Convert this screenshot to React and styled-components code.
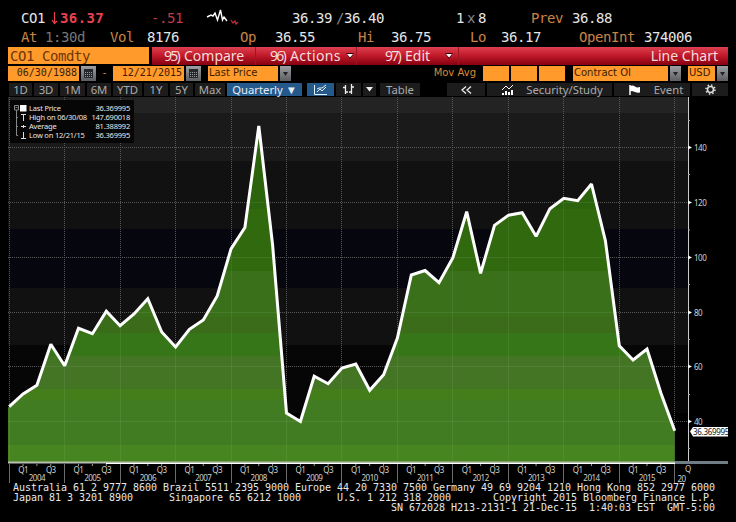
import React from "react";
import styled, { createGlobalStyle } from "styled-components";

const GlobalStyle = createGlobalStyle`
  body {
    margin: 0;
    background: #000;
    overflow: hidden;
  }
  * {
    box-sizing: border-box;
  }
`;

const levels = [
  406.7, 394, 385.3, 344.3, 365.7, 328.3, 333.7, 311.3, 325.7, 314, 298.7, 332,
  347, 329.3, 320, 296, 249, 227.5, 126, 245, 413, 421.5, 376.3, 383.7, 368,
  364, 390.3, 374.7, 338, 275, 270.5, 282.7, 257.7, 211.7, 273.3, 225.3, 215.3,
  212.7, 236.3, 208.7, 198.3, 200.7, 184, 240.7, 345.7, 360, 349, 393, 430.7,
];
const stepX = 13.865;
const px = (i) => 9.2 + i * stepX;
const points = levels.map((y, i) => `${px(i).toFixed(1)},${y}`).join(" ");
const areaPoints = `8,463 8,407.5 ${points} 674.7,463`;

const darkBands = [
  [97, 16, "#232323"],
  [113, 48, "#1a1a1a"],
  [161, 68, "#111111"],
  [229, 59, "#06060f"],
  [288, 57, "#111111"],
  [345, 68, "#060606"],
  [413, 50, "#000000"],
];
const greenBands = [
  [97, 112, "#2c640e"],
  [209, 62, "#31690f"],
  [271, 46, "#3a701a"],
  [317, 16, "#3a6c1a"],
  [333, 23, "#367618"],
  [356, 33, "#437525"],
  [389, 11, "#437e1a"],
  [400, 45, "#417c22"],
  [445, 18, "#46851f"],
];
const yTicks = [
  [140, 147.5],
  [120, 202.5],
  [100, 257.5],
  [80, 312.5],
  [60, 366.5],
  [40, 421.5],
];
const minorTicks = [120.5, 174.5, 230, 284.5, 339.5, 394.5, 448.5];
const years = [2004, 2005, 2006, 2007, 2008, 2009, 2010, 2011, 2012, 2013, 2014, 2015];
const gridX = [...years, 2016].map((_, i) => Math.floor(px(i * 4)) + 0.5);

const quotesTop = [
  { x: 21, text: "CO1" },
  { x: 60, text: "36.37", color: "#e8414f", bold: true },
  { x: 151, text: "-.51", color: "#c23a45" },
  { x: 292, text: "36.39" },
  { x: 336, text: "/", color: "#888" },
  { x: 344, text: "36.40" },
  { x: 456, text: "1" },
  { x: 467, text: "x", color: "#888" },
  { x: 478, text: "8" },
  { x: 531, text: "Prev", color: "#c98347" },
  { x: 572, text: "36.88" },
];
const quotesBottom = [
  { x: 21, text: "At", color: "#c98347" },
  { x: 45, text: "1:30d", color: "#777" },
  { x: 110, text: "Vol", color: "#c98347" },
  { x: 147, text: "8176" },
  { x: 240, text: "Op", color: "#c98347" },
  { x: 275, text: "36.55" },
  { x: 358, text: "Hi", color: "#c98347" },
  { x: 391, text: "36.75" },
  { x: 470, text: "Lo", color: "#c98347" },
  { x: 501, text: "36.17" },
  { x: 579, text: "OpenInt", color: "#c98347" },
  { x: 644, text: "374006" },
];

// each quote sits in a track that runs up to where the next one starts
const tracks = (items) =>
  items
    .map((q, i) => (i < items.length - 1 ? `${items[i + 1].x - q.x}px` : "1fr"))
    .join(" ");

function QuoteRow({ items, top }) {
  return (
    <QuoteLine $start={items[0].x} $tracks={tracks(items)} $top={top}>
      {items.map((q, i) => (
        <Quote key={i} $color={q.color} $bold={q.bold}>
          {q.text}
        </Quote>
      ))}
    </QuoteLine>
  );
}

function Calendar() {
  return (
    <GreyButton $w={15}>
      <svg width="9" height="9" viewBox="0 0 9 9">
        <path d="M0 0H9V9H0Z" fill="#24272b" />
        <path d="M1 3.500H8M1 5.500H8M1 7.500H8" stroke="#999" strokeWidth="1" strokeDasharray="1 1" />
      </svg>
    </GreyButton>
  );
}

function Drop() {
  return (
    <GreyButton $w={11}>
      <svg width="5" height="4">
        <path d="M0 0H5L2.5 4Z" fill="#222" />
      </svg>
    </GreyButton>
  );
}

function MenuArrow() {
  return (
    <svg width="8" height="6">
      <path d="M0 0H8L4 6Z" fill="#310508" />
      <path d="M1 1H7L4 4.5Z" fill="#fff" />
    </svg>
  );
}

function Chart() {
  return (
    <Plot width="736" height="386" viewBox="0 97 736 386">
      <defs>
        <clipPath id="area">
          <polygon points={areaPoints} />
        </clipPath>
      </defs>
      {darkBands.map(([y, h, c]) => (
        <rect key={y} x="8" y={y} width="680" height={h} fill={c} />
      ))}
      <g stroke="#585858" strokeDasharray="1 1">
        {yTicks.map(([v, y]) => (
          <path key={v} d={`M8 ${y}H688`} />
        ))}
        {gridX.map((x) => (
          <path key={x} d={`M${x} 97V463`} />
        ))}
      </g>
      <g clipPath="url(#area)">
        {greenBands.map(([y, h, c]) => (
          <rect key={y} x="8" y={y} width="668" height={h} fill={c} />
        ))}
        <g stroke="#fff" strokeOpacity=".07">
          {yTicks.map(([v, y]) => (
            <path key={v} d={`M8 ${y}H675`} />
          ))}
          {gridX.map((x) => (
            <path key={x} d={`M${x} 97V463`} />
          ))}
        </g>
      </g>
      <polyline points={points} fill="none" stroke="#fff" strokeWidth="3" strokeLinejoin="miter" strokeMiterlimit="2" />

      <path d="M688.5 97V462" stroke="#ccc" />
      {yTicks.map(([v, y]) => (
        <g key={v}>
          <path d={`M688 ${y - 2}L692 ${y}L688 ${y + 2}Z`} fill="#fff" />
          <AxisText x="694" y={y + 3}>{v}</AxisText>
        </g>
      ))}
      {minorTicks.map((y) => (
        <path key={y} d={`M688 ${y}H690`} stroke="#aaa" />
      ))}
      <path d="M690 431.5L693 427H728V436.500H693Z" fill="#fff" />
      <AxisText x="693" y="434.500" $dark>36.369995</AxisText>

      <path d="M8 462.500H688" stroke="#b9c0b4" strokeWidth="2" />
      <path d="M106 463.500H675" stroke="#fff" />
      <path d="M675 462.500H728" stroke="#6f7d84" strokeWidth="3" />
      {gridX.map((x) => (
        <path key={x} d={`M${x} 464V483`} stroke="#6a6a6a" />
      ))}
      {years.map((year, i) => (
        <g key={year}>
          <path d={`M${px(i * 4 + 1)} 464v2M${px(i * 4 + 2)} 464v2M${px(i * 4 + 3)} 464v2`} stroke="#999" />
          <AxisText x={px(i * 4 + 1)} y="472.500" $center>Q1</AxisText>
          <AxisText x={px(i * 4 + 3)} y="472.500" $center>Q3</AxisText>
          <AxisText x={px(i * 4 + 2)} y="481" $center>{year}</AxisText>
        </g>
      ))}
      <AxisText x="685" y="472">Q</AxisText>
      <AxisText x="677.500" y="481.500">20</AxisText>
    </Plot>
  );
}

export default function App() {
  return (
    <Terminal>
      <GlobalStyle />
      <Quotes>
        <QuoteRow items={quotesTop} top={8} />
        <QuoteRow items={quotesBottom} top={1} />
        <Spark width="190" height="20" viewBox="50 8 190 20">
          <path d="M54.500 12V23M52 20L54.500 23.500L57 21" stroke="#e8414f" strokeWidth="1.200" fill="none" />
          <path d="M207 17L211 15L213 16L215 13L217.500 20L220.500 10L222.500 20L224 17L227 21" stroke="#fff" strokeWidth="1.400" fill="none" />
          <path d="M231 20L233 23L235 21L236 24L238 22" stroke="#c22b35" strokeWidth="1.300" fill="none" />
        </Spark>
      </Quotes>

      <TitleBar>
        <Ticker>CO1 Comdty</Ticker>
        <RedBar>
          <MenuItem $w={104} $pad={12}><Num>95)</Num>Compare</MenuItem>
          <MenuItem $w={101} $pad={14} $wide><Num>96)</Num>Actions<MenuArrow /></MenuItem>
          <MenuItem $w={102} $pad={28}><Num>97)</Num>Edit<Gap $w={5} /><MenuArrow /></MenuItem>
          <ChartName>Line Chart</ChartName>
        </RedBar>
      </TitleBar>

      <Fields>
        <Field $w={71} $right>06/30/1988</Field>
        <Gap $w={2} /><Calendar />
        <Dash>-</Dash>
        <Field $w={71} $right>12/21/2015</Field>
        <Gap $w={2} /><Calendar />
        <Gap $w={7} />
        <Field $w={70}>Last Price</Field>
        <Gap $w={2} /><Drop />
        <MovAvg>Mov Avg</MovAvg>
        <Field $w={26} /><Gap $w={2} />
        <Field $w={26} /><Gap $w={2} />
        <Field $w={26} /><Gap $w={8} />
        <Field $w={95}>Contract OI</Field>
        <Gap $w={2} /><Drop /><Gap $w={7} />
        <Field $w={27}>USD</Field>
        <Gap $w={2} /><Drop />
      </Fields>

      <Tools>
        <Tool $w={23}>1D</Tool>
        <Tool $w={24}>3D</Tool>
        <Tool $w={25}>1M</Tool>
        <Tool $w={24}>6M</Tool>
        <Tool $w={29}>YTD</Tool>
        <Tool $w={24}>1Y</Tool>
        <Tool $w={23}>5Y</Tool>
        <Tool $w={30}>Max</Tool>
        <Tool $w={75} $on>Quarterly&nbsp;▼</Tool>
        <Gap $w={1} />
        <Tool $w={27} $on>
          <svg width="15" height="12" fill="none" stroke="#e8f0f5">
            <path d="M1.500 1V10.500H14M4 8L7 5L9 7L13 3M4 5L6 4L9 4L13 1" />
          </svg>
        </Tool>
        <Tool $w={25}>
          <svg width="14" height="11" fill="none" stroke="#eee" strokeWidth="1.300">
            <path d="M3.500 1V10M1 3.500H3.500M3.500 8H6M9.500 0V10M7 8H9.500M9.500 3H12" />
          </svg>
        </Tool>
        <Tool $w={13}>
          <svg width="7" height="5"><path d="M0 0H7L3.500 4.500Z" fill="#eee" /></svg>
        </Tool>
        <Gap $w={0} />
        <Tool $w={40}>Table</Tool>
        <Gap $w={23} />
        <Tool $w={38}>
          <svg width="11" height="8" fill="none" stroke="#eee" strokeWidth="1.300">
            <path d="M5 .5L1 4L5 7.500M10 .5L6 4L10 7.500" />
          </svg>
        </Tool>
        <Tool $w={125}>
          <Gap $w={5} />
          <svg width="13" height="11">
            <path d="M1 6L5 2L8 5L12 1" fill="none" stroke="#fff" />
            <path d="M1 9h2v2h-2zM4 7h2v4h-2zM7 8h2v3h-2zM10 6h2v5h-2z" fill="#fff" />
          </svg>
          <Gap $w={12} />Security/Study
        </Tool>
        <Tool $w={76}>
          <Gap $w={8} />
          <svg width="12" height="10">
            <path d="M1 0V10" stroke="#fff" strokeWidth="1.500" />
            <path d="M1 1Q4 0 6 1.500T11 2V7.500Q8 8 6 7T1 6Z" fill="#fff" />
          </svg>
          <Gap $w={13} />Event
        </Tool>
        <Tool $w={36}>
          <svg width="11" height="11" viewBox="-5.500 -5.500 11 11" fill="none" stroke="#ddd">
            <circle r="3" strokeWidth="1.600" />
            <circle r="4.500" strokeWidth="1.500" strokeDasharray="1.500 2.034" />
          </svg>
        </Tool>
      </Tools>

      <ChartArea>
        <Chart />
        <Legend>
          <LegendMarks width="13" height="36" fill="none" stroke="#ddd">
            <path d="M.5 1.500H4.500V6H.5ZM1.500 3.500H3.500M2.500 6V31.500M2.500 13.500H4M2.500 22.500H4M2.500 31.500H4" stroke="#888" />
            <path d="M6 1H12.500V7.500H6Z" fill="#fff" stroke="none" />
            <path d="M7 10.500H12M9.500 10V17M7 22.500H12M9.500 21V24M7 34.500H12M9.500 28V34" />
          </LegendMarks>
          <LegendRows>
            <LegendRow><span>Last Price</span><span>36.369995</span></LegendRow>
            <LegendRow><span>High on 06/30/08</span><span>147.690018</span></LegendRow>
            <LegendRow><span>Average</span><span>81.388992</span></LegendRow>
            <LegendRow><span>Low on 12/21/15</span><span>36.369995</span></LegendRow>
          </LegendRows>
        </Legend>
      </ChartArea>

      <Footer>
        <div>Australia 61 2 9777 8600 Brazil 5511 2395 9000 Europe 44 20 7330 7500 Germany 49 69 9204 1210 Hong Kong 852 2977 6000</div>
        <div>{"Japan 81 3 3201 8900      Singapore 65 6212 1000      U.S. 1 212 318 2000       Copyright 2015 Bloomberg Finance L.P."}</div>
        <FooterEnd>{"SN 672028 H213-2131-1 21-Dec-15  1:40:03 EST  GMT-5:00"}</FooterEnd>
      </Footer>
    </Terminal>
  );
}

const Terminal = styled.div`
  width: 736px;
  height: 522px;
  background: #000;
  overflow: hidden;
  display: flex;
  flex-direction: column;
`;

const Quotes = styled.div`
  position: relative;
  height: 47px;
  flex: none;
`;

const QuoteLine = styled.div`
  display: grid;
  grid-template-columns: ${(p) => p.$tracks};
  padding-left: ${(p) => p.$start}px;
  padding-top: ${(p) => p.$top}px;
`;

const Quote = styled.span`
  font-family: "DejaVu Sans Mono", monospace;
  font-size: 14px;
  line-height: 20px;
  height: 18px;
  white-space: nowrap;
  letter-spacing: ${(p) => (p.$bold ? 0.4 : -0.43)}px;
  font-weight: ${(p) => (p.$bold ? "bold" : "normal")};
  color: ${(p) => p.$color || "#e6e6e6"};
`;

const Spark = styled.svg`
  position: absolute;
  left: 50px;
  top: 8px;
`;

const TitleBar = styled.div`
  display: flex;
  flex: none;
  height: 18px;
  padding: 0 8px;
  gap: 3px;
`;

const Ticker = styled.div`
  width: 141px;
  height: 17px;
  padding-left: 2px;
  background: #ff9a2b;
  color: #6e3608;
  font: 14px/18px "DejaVu Sans Mono", monospace;
  letter-spacing: -0.43px;
`;

const RedBar = styled.div`
  display: flex;
  flex: 1;
  background: linear-gradient(#dd4050, #c31c2c 45%, #86000f);
  color: #f6dcdc;
  font: 14px/18px "Noto Sans", sans-serif;
`;

const MenuItem = styled.div`
  display: flex;
  align-items: center;
  gap: 5px;
  width: ${(p) => p.$w}px;
  padding-left: ${(p) => p.$pad}px;
  border-right: 1px solid #a01522;
  white-space: nowrap;
  letter-spacing: ${(p) => (p.$wide ? 0.4 : 0)}px;
`;

const Num = styled.span`
  width: 15px;
  font-size: 14px;
  letter-spacing: -1.7px;
`;

const ChartName = styled.div`
  margin-left: auto;
  padding-right: 10px;
`;

const Fields = styled.div`
  display: flex;
  flex: none;
  height: 17px;
  padding: 1px 8px;
  font: 10px/14px "DejaVu Sans", sans-serif;
`;

const Field = styled.div`
  width: ${(p) => p.$w}px;
  background: #ff9a2b;
  color: #3c1c02;
  white-space: nowrap;
  padding: 0 2px 0 1px;
  ${(p) =>
    p.$right &&
    `text-align: right;
  font-family: "DejaVu Sans Mono", monospace;`}
`;

const Gap = styled.span`
  flex: none;
  width: ${(p) => p.$w}px;
`;

const GreyButton = styled.div`
  display: flex;
  align-items: center;
  justify-content: center;
  width: ${(p) => p.$w}px;
  background: linear-gradient(#9d9fa2, #5c5e61);
`;

const Dash = styled.span`
  width: 17px;
  text-align: center;
  color: #c98347;
`;

const MovAvg = styled.span`
  flex: 1;
  text-align: right;
  padding-right: 7px;
  color: #d98a35;
`;

const Tools = styled.div`
  display: flex;
  flex: none;
  gap: 2px;
  height: 15px;
  padding: 1px 8px 1px 9px;
`;

const Tool = styled.div`
  display: flex;
  flex: none;
  align-items: center;
  justify-content: center;
  width: ${(p) => p.$w}px;
  height: 13px;
  background: ${(p) => (p.$on ? "#24598c" : "#1c1c1d")};
  color: ${(p) => (p.$on ? "#e6edf3" : "#aaa")};
  font: 11.3px/13px "Noto Sans", sans-serif;
  white-space: nowrap;
`;

const ChartArea = styled.div`
  position: relative;
  flex: none;
  height: 386px;
`;

const Plot = styled.svg`
  display: block;
`;

const AxisText = styled.text`
  font: 8px "Noto Sans", sans-serif;
  letter-spacing: ${(p) => (p.$dark ? -0.3 : -0.5)}px;
  fill: ${(p) => (p.$dark ? "#111" : "#d2d2ca")};
  text-anchor: ${(p) => (p.$center ? "middle" : "start")};
`;

const Legend = styled.div`
  position: absolute;
  left: 10px;
  top: 3px;
  width: 124px;
  height: 43px;
  padding: 4px 4px 0;
  display: flex;
  gap: 2px;
  background: #060606;
`;

const LegendMarks = styled.svg`
  flex: none;
`;

const LegendRows = styled.div`
  flex: 1;
`;

const LegendRow = styled.div`
  display: flex;
  justify-content: space-between;
  font: 7.5px/9px "Noto Sans", sans-serif;
  letter-spacing: -0.2px;
  color: #e8e8e8;
  white-space: nowrap;
`;

const Footer = styled.div`
  width: 702px;
  margin-left: 13px;
  font: 10px/10px "DejaVu Sans Mono", monospace;
  letter-spacing: -0.02px;
  color: #e8e8e8;
  white-space: pre;
`;

const FooterEnd = styled.div`
  text-align: right;
`;
